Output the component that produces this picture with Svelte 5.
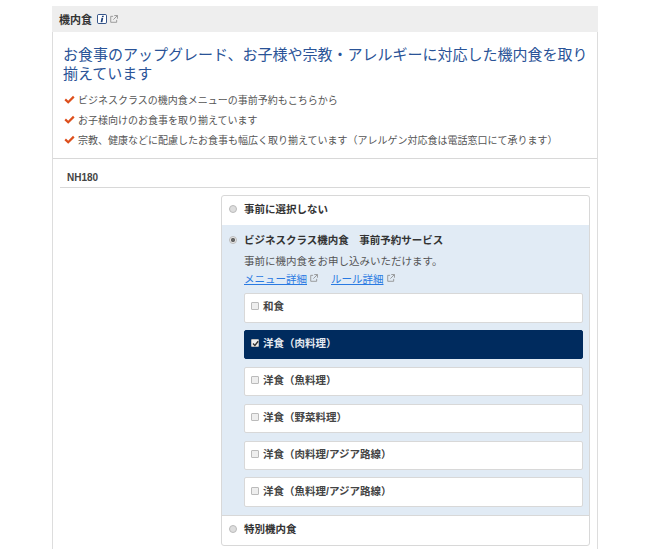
<script>
	const bullets = [
		'ビジネスクラスの機内食メニューの事前予約もこちらから',
		'お子様向けのお食事を取り揃えています',
		'宗教、健康などに配慮したお食事も幅広く取り揃えています（アレルゲン対応食は電話窓口にて承ります）'
	];
	const meals = [
		{ name: '和食', checked: false },
		{ name: '洋食（肉料理）', checked: true },
		{ name: '洋食（魚料理）', checked: false },
		{ name: '洋食（野菜料理）', checked: false },
		{ name: '洋食（肉料理/アジア路線）', checked: false },
		{ name: '洋食（魚料理/アジア路線）', checked: false }
	];
</script>

{#snippet external()}
	<svg class="ext" viewBox="0 0 9 9" width="8" height="8" aria-hidden="true">
		<path d="M3.5 1.5H.8v6.7h6.7V5.5" fill="none" stroke="#888" stroke-width="0.9" />
		<path d="M4.8.6h3.6v3.6M8.2.8 3.8 5.2" fill="none" stroke="#888" stroke-width="0.9" />
	</svg>
{/snippet}

<div class="page">
	<div class="header">
		<span class="header-title">機内食</span>
		<svg class="info" viewBox="0 0 11 11" width="10" height="10" aria-hidden="true">
			<rect x="0.5" y="0.5" width="10" height="10" rx="1.5" fill="#fff" stroke="#1c3f7a" />
			<path d="M5.7 1.8h1.9l-.4 1.6H5.3zM5 4.2h1.9L5.9 9.2H4z" fill="#1c3f7a" />
		</svg>
		{@render external()}
	</div>

	<div class="card">
		<section class="intro">
			<h2>お食事のアップグレード、お子様や宗教・アレルギーに対応した機内食を取り<br />揃えています</h2>
			<ul>
				{#each bullets as text}
					<li>
						<svg viewBox="0 0 11 9" width="11" height="9" aria-hidden="true">
							<path d="M1.2 4.4 4.2 7.2 9.8 1.6" fill="none" stroke="#dd4f1c" stroke-width="2.2" />
						</svg>
						{text}
					</li>
				{/each}
			</ul>
		</section>

		<section class="flight">
			<div class="flight-name">NH180</div>
			<div class="options">
				<div class="option">
					<span class="radio"></span>
					<span class="option-label">事前に選択しない</span>
				</div>

				<div class="option selected">
					<div class="selected-head">
						<span class="radio on"></span>
						<span class="option-label">ビジネスクラス機内食　事前予約サービス</span>
					</div>
					<div class="selected-body">
						<p>事前に機内食をお申し込みいただけます。</p>
						<div class="links">
							<a href="#menu">メニュー詳細</a>{@render external()}
							<a class="second" href="#rule">ルール詳細</a>{@render external()}
						</div>
						<div class="meals">
							{#each meals as meal}
								<div class="meal" class:checked={meal.checked}>
									<span class="box">
										{#if meal.checked}
											<svg viewBox="0 0 9 9" width="9" height="9" aria-hidden="true">
												<path d="M2 4.5 3.9 6.5 7.2 2.3" fill="none" stroke="#333" stroke-width="1.4" />
											</svg>
										{/if}
									</span>
									<span>{meal.name}</span>
								</div>
							{/each}
						</div>
					</div>
				</div>

				<div class="option last">
					<span class="radio"></span>
					<span class="option-label">特別機内食</span>
				</div>
			</div>
		</section>
	</div>
</div>

<style>
	:global(body) {
		margin: 0;
		background: #fff;
		overflow: hidden;
	}
	.page {
		width: 546px;
		height: 543px;
		margin: 0 0 0 52px;
		padding-top: 6px;
		font-family: 'Liberation Sans', 'Noto Sans CJK JP', sans-serif;
		color: #444;
		font-size: 10.5px;
	}
	.header {
		height: 26px;
		background: #eeeeee;
		display: flex;
		align-items: center;
		padding-left: 7px;
		gap: 3px;
	}
	.header-title {
		font-size: 11px;
		font-weight: 700;
		color: #333;
		margin-right: 2px;
	}
	.ext {
		flex: none;
	}
	.card {
		border-left: 1px solid #ddd;
		border-right: 1px solid #ddd;
		height: 517px;
		box-sizing: border-box;
	}
	.intro {
		height: 127px;
		box-sizing: border-box;
		border-bottom: 1px solid #d8d8d8;
		padding: 13px 0 0 11px;
	}
	h2 {
		margin: 0 0 0 -1px;
		font-size: 15px;
		font-weight: 400;
		line-height: 19px;
		color: #2a5397;
	}
	ul {
		list-style: none;
		margin: 6px 0 0;
		padding: 0;
	}
	li {
		display: flex;
		align-items: center;
		gap: 3px;
		height: 20px;
		font-size: 10px;
		color: #555;
	}
	.flight {
		padding: 0 7px 0 7px;
	}
	.flight-name {
		height: 29px;
		box-sizing: border-box;
		border-bottom: 1px solid #d8d8d8;
		padding: 12px 0 0 7px;
		font-size: 10px;
		line-height: 13px;
		font-weight: 700;
		color: #444;
	}
	.options {
		margin: 7px 0 0 161px;
		border: 1px solid #d8d8d8;
		border-radius: 3px;
		font-size: 10.5px;
	}
	.option {
		display: flex;
		align-items: center;
		box-sizing: border-box;
		height: 29px;
		padding: 0 0 4px 7px;
		gap: 7px;
	}
	.option.selected {
		display: block;
		height: 290px;
		padding: 0;
		background: #e1ebf5;
	}
	.option.last {
		height: 30px;
		border-top: 1px solid #d8d8d8;
	}
	.selected-head {
		display: flex;
		align-items: center;
		gap: 7px;
		height: 29px;
		padding-left: 7px;
	}
	.option-label {
		font-weight: 700;
		color: #333;
	}
	.radio {
		flex: none;
		width: 8px;
		height: 8px;
		border-radius: 50%;
		box-sizing: border-box;
		border: 1px solid #bbb;
		background: #ddd;
	}
	.radio.on {
		background: radial-gradient(circle, #666 0 1.8px, #e8e8e8 2.4px);
	}
	.selected-body {
		padding: 0 6px 0 22px;
	}
	p {
		margin: -1px 0 1px;
		height: 16px;
		line-height: 16px;
		color: #555;
	}
	.links {
		display: flex;
		align-items: center;
		height: 16px;
		gap: 3px;
	}
	.links a {
		color: #2a7ae2;
		text-decoration: underline;
	}
	.links a.second {
		margin-left: 10px;
	}
	.meals {
		display: flex;
		flex-direction: column;
		gap: 7.4px;
		margin-top: 7px;
	}
	.meal {
		height: 29.5px;
		box-sizing: border-box;
		display: flex;
		align-items: center;
		gap: 4px;
		padding: 0 0 4px 6px;
		background: #fff;
		border: 1px solid #d8d8d8;
		border-radius: 2px;
		font-weight: 700;
		color: #444;
	}
	.meal.checked {
		background: #002b5e;
		border-color: #002b5e;
		color: #e4e9f0;
	}
	.box {
		flex: none;
		width: 8px;
		height: 8px;
		margin-top: 1px;
		box-sizing: border-box;
		border: 1px solid #bbb;
		border-radius: 1px;
		background: #eee;
		display: flex;
		align-items: center;
		justify-content: center;
	}
	.box svg {
		flex: none;
	}
</style>
